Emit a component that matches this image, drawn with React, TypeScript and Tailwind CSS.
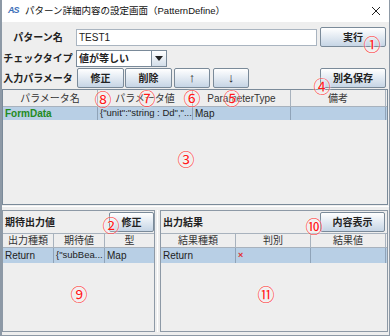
const FONT = "font-['Liberation_Sans','Noto_Sans_CJK_JP',sans-serif]";
const btn =
  "h-[20px] shrink-0 flex items-center justify-center rounded-[2px] border border-[#7a8a99] bg-linear-to-b from-[#ffffff] to-[#c6d5e5] text-[10px] font-bold text-[#222]";
const selRow = "bg-[#b8cfe5]";

interface Col {
  title: string;
  width: string;
}

const topCols: Col[] = [
  { title: 'パラメータ名', width: 'w-[95px]' },
  { title: 'パラメータ値', width: 'w-[95px]' },
  { title: 'ParameterType', width: 'w-[98px]' },
  { title: '備考', width: 'w-[95px]' },
];

const marks = [
  { n: '①', pos: 'left-[370px] top-[43px]' },
  { n: '②', pos: 'left-[109px] top-[224px]' },
  { n: '③', pos: 'left-[184px] top-[158px]' },
  { n: '④', pos: 'left-[320px] top-[85px]' },
  { n: '⑤', pos: 'left-[230px] top-[97px]' },
  { n: '⑥', pos: 'left-[190px] top-[97px]' },
  { n: '⑦', pos: 'left-[145px] top-[97px]' },
  { n: '⑧', pos: 'left-[101px] top-[98px]' },
  { n: '⑨', pos: 'left-[77px] top-[293px]' },
  { n: '⑩', pos: 'left-[312px] top-[225px]' },
  { n: '⑪', pos: 'left-[264px] top-[293px]' },
];

function HeaderCell({ title, width }: Col) {
  return (
    <div className={`${width} shrink-0 h-full flex items-center justify-center border-r border-[#a8b2bd] text-[#333] whitespace-nowrap overflow-hidden`}>
      {title}
    </div>
  );
}

function Cell({ children, width, className = '' }: { children?: React.ReactNode; width: string; className?: string }) {
  return (
    <div className={`${width} shrink-0 h-full flex items-center px-[2px] border-r border-[#8fa3b8] whitespace-nowrap overflow-hidden ${className}`}>
      {children}
    </div>
  );
}

function TitleBar() {
  return (
    <div className="h-[22px] bg-white flex items-center">
      <span className="ml-[6px] w-[14px] text-[9px] italic font-bold text-[#3d6fb8] tracking-[-1px]">AS</span>
      <span className="ml-[3px] text-[9.5px] text-[#111] whitespace-nowrap">パターン詳細内容の設定画面（PatternDefine）</span>
      <svg className="ml-auto mr-[8px]" width="10" height="10" viewBox="0 0 10 10">
        <path d="M1 1 L9 9 M9 1 L1 9" stroke="#222" strokeWidth="1" />
      </svg>
    </div>
  );
}

export default function App() {
  return (
    <div className={`${FONT} relative w-[390px] h-[336px] overflow-hidden bg-[#eeeeee] border-l-2 border-r border-b border-[#8d99a6] text-[10px] text-[#222]`}>
      <TitleBar />

      {/* パターン名 */}
      <div className="mt-[5px] h-[20px] flex items-center">
        <div className="w-[72px] text-center font-bold whitespace-nowrap">パターン名</div>
        <div className="ml-[2px] w-[241px] h-[17px] bg-white border border-[#a9b4c0] flex items-center px-[2px]">TEST1</div>
        <button className={`${btn} ml-[3px] w-[66px]`}>実行</button>
      </div>

      {/* チェックタイプ */}
      <div className="mt-[2px] h-[18px] flex items-center">
        <div className="w-[72px] text-center font-bold whitespace-nowrap">チェックタイプ</div>
        <div className="ml-[2px] w-[91px] h-[17px] bg-white border border-[#7a8a99] flex">
          <span className="flex-1 flex items-center px-[2px] font-bold">値が等しい</span>
          <span className="w-[15px] border-l border-[#7a8a99] bg-linear-to-b from-[#ffffff] to-[#d3dee9] flex items-center justify-center">
            <svg width="8" height="5" viewBox="0 0 8 5">
              <path d="M0 0 H8 L4 5 Z" fill="#222" />
            </svg>
          </span>
        </div>
      </div>

      {/* 入力パラメータ */}
      <div className="mt-[1px] h-[20px] flex items-center">
        <div className="w-[72px] text-center font-bold whitespace-nowrap">入力パラメータ</div>
        <button className={`${btn} ml-[3px] w-[47px]`}>修正</button>
        <button className={`${btn} ml-[1px] w-[47px]`}>削除</button>
        <button className={`${btn} ml-[2px] w-[36px] text-[13px]`}>↑</button>
        <button className={`${btn} ml-[3px] w-[36px] text-[13px]`}>↓</button>
        <button className={`${btn} ml-auto mr-[3px] w-[66px]`}>別名保存</button>
      </div>

      {/* parameter table */}
      <div className="mt-[1px] mr-[1px] h-[116px] border border-[#7a8a99] flex flex-col">
        <div className="h-[17px] flex border-b border-[#a8b2bd]">
          {topCols.map((c) => (
            <HeaderCell key={c.title} {...c} />
          ))}
        </div>
        <div className={`h-[13px] flex ${selRow}`}>
          <Cell width="w-[95px]" className="font-bold text-[#228b22]">FormData</Cell>
          <Cell width="w-[95px]" className="text-[9.5px]">{'{"unit":"string : Dd","...'}</Cell>
          <Cell width="w-[98px]">Map</Cell>
          <Cell width="w-[95px]" />
        </div>
        <div className="flex-1" />
      </div>

      <div className="mt-[1px] h-[1px] bg-white" />

      {/* bottom panels */}
      <div className="mt-[3px] h-[122px] flex mr-[1px]">
        <div className="w-[153px] border border-[#8d99a6] flex flex-col">
          <div className="h-[22px] flex items-center justify-between">
            <span className="pl-[2px] font-bold">期待出力値</span>
            <button className={`${btn} w-[45px]`}>修正</button>
          </div>
          <div className="h-[15px] flex border-y border-[#a8b2bd]">
            <HeaderCell title="出力種類" width="w-[51px]" />
            <HeaderCell title="期待値" width="w-[51px]" />
            <div className="flex-1 flex items-center justify-center text-[#333]">型</div>
          </div>
          <div className={`h-[15px] flex ${selRow}`}>
            <Cell width="w-[51px]">Return</Cell>
            <Cell width="w-[51px]" className="text-[9.5px]">{'{"subBea...'}</Cell>
            <div className="flex-1 flex items-center px-[2px]">Map</div>
          </div>
        </div>

        <div className="w-[5px] flex justify-center">
          <div className="w-[1px] bg-white" />
        </div>

        <div className="flex-1 border border-[#8d99a6] flex flex-col">
          <div className="h-[22px] flex items-center justify-between">
            <span className="pl-[2px] font-bold">出力結果</span>
            <button className={`${btn} w-[65px] mr-[2px]`}>内容表示</button>
          </div>
          <div className="h-[15px] flex border-y border-[#a8b2bd]">
            <HeaderCell title="結果種類" width="w-[75px]" />
            <HeaderCell title="判別" width="w-[75px]" />
            <div className="w-[75px] flex items-center justify-center border-r border-[#a8b2bd] text-[#333]">結果値</div>
          </div>
          <div className={`h-[15px] flex ${selRow}`}>
            <Cell width="w-[75px]">Return</Cell>
            <Cell width="w-[75px]" className="text-[#e03030] text-[9px] font-bold">×</Cell>
            <Cell width="w-[75px]" />
          </div>
        </div>
      </div>

      {marks.map((m) => (
        <span
          key={m.n}
          className={`absolute ${m.pos} -translate-x-1/2 -translate-y-1/2 font-['Noto_Sans_CJK_JP',sans-serif] text-[17px] leading-none text-[#ff1a1a] [text-shadow:0_0_2px_#fff,0_0_2px_#fff]`}
        >
          {m.n}
        </span>
      ))}
    </div>
  );
}
